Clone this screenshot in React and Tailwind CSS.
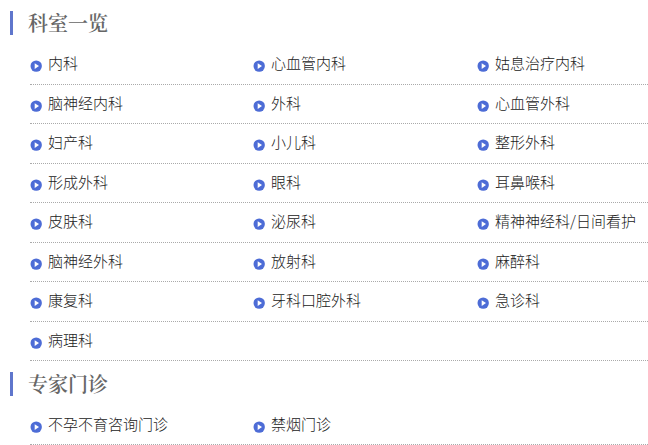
const departments = [
  ["内科", "心血管内科", "姑息治疗内科"],
  ["脑神经内科", "外科", "心血管外科"],
  ["妇产科", "小儿科", "整形外科"],
  ["形成外科", "眼科", "耳鼻喉科"],
  ["皮肤科", "泌尿科", "精神神经科/日间看护"],
  ["脑神经外科", "放射科", "麻醉科"],
  ["康复科", "牙科口腔外科", "急诊科"],
  ["病理科"],
];

const clinics = [["不孕不育咨询门诊", "禁烟门诊"]];

function PlayIcon() {
  return (
    <svg
      viewBox="0 0 12 12"
      className="mt-1.5 size-3 shrink-0"
      aria-hidden="true"
    >
      <circle cx="6.2" cy="6.1" r="5.7" fill="#4d6cd6" />
      <path d="M4.7 3.3 9 6.1 4.7 8.9Z" fill="#fff" />
    </svg>
  );
}

function Section({ title, rows }) {
  return (
    <section>
      <h2 className="mt-[11px] mb-2.5 border-l-3 border-[#5f76cc] pl-[15px] font-['Noto_Serif_CJK_SC','Noto_Sans_CJK_SC',serif] text-[20px] leading-6 font-semibold text-[#666]">
        {title}
      </h2>
      <div className="ml-5">
        {rows.map((row) => (
          <ul
            key={row[0]}
            className="grid h-10 grid-cols-[223px_224px_1fr] border-b border-dotted border-[#aaa] even:h-[39px] last:h-[39px]"
          >
            {row.map((name) => (
              <li key={name} className="flex items-center pb-[3px]">
                <a href="#" className="flex items-center gap-1.5 whitespace-nowrap">
                  <PlayIcon />
                  {name}
                </a>
              </li>
            ))}
          </ul>
        ))}
      </div>
    </section>
  );
}

export default function App() {
  return (
    <main
      lang="zh-CN"
      className="flow-root overflow-hidden bg-white pl-2.5 font-['Noto_Sans_CJK_SC',sans-serif] text-[15px] leading-6 font-light text-[#222]"
    >
      <Section title="科室一览" rows={departments} />
      <Section title="专家门诊" rows={clinics} />
    </main>
  );
}
